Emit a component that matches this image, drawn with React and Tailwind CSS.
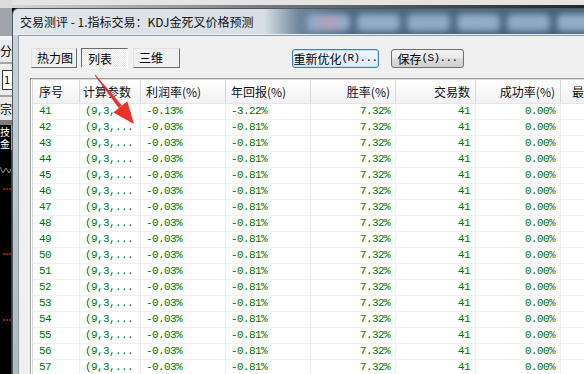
import React from "react";

const rows = Array.from({ length: 17 }, (_, i) => ({
  id: 41 + i,
  profit: i === 0 ? "-0.13%" : "-0.03%",
  annual: i === 0 ? "-3.22%" : "-0.81%",
}));

function LeftBackdrop() {
  return (
    <div className="w-[12px] shrink-0 flex flex-col overflow-hidden">
      <div className="h-[8px] bg-[#dcdcdc]" />
      <div className="h-[28px] bg-[#9ea4aa]" />
      <div className="h-[4px] bg-[#f4f4f4]" />
      <div className="h-[22px] bg-[#e9e9e9] flex items-center text-[12px] leading-none">分</div>
      <div className="h-[2px] bg-[#a3a3a3]" />
      <div className="h-[31px] bg-[#ececec] flex items-center">
        <div className="ml-[2px] w-[10px] h-[20px] border border-r-0 border-[#3a3a3a] bg-white flex items-center pl-[1px] text-[11px] leading-none">1</div>
      </div>
      <div className="h-[2px] bg-[#a3a3a3]" />
      <div className="h-[23px] bg-[#e9e9e9] flex items-center text-[12px] leading-none">宗</div>
      <div className="h-[5px] bg-[#7c7c7c]" />
      <div className="h-[25px] bg-black text-white text-[10px] leading-[12px] pt-px border-r border-[#9a9a9a]">
        技<br />金
      </div>
      <div className="flex-1 bg-black flex flex-col border-r border-[#3c3c3c]">
        <svg className="mt-[16px]" width="11" height="8" viewBox="0 0 11 8">
          <polyline points="0,1 3,7 6,2 9,7 11,3" fill="none" stroke="#8a8a8a" strokeWidth="1" />
        </svg>
        <div className="mt-[14px] ml-[3px] w-[8px] border-t-2 border-dotted border-[#8c1a1a]" />
        <div className="mt-[63px] ml-[3px] w-[8px] border-t-2 border-dotted border-[#8c1a1a]" />
        <div className="mt-[64px] ml-[3px] w-[8px] border-t-2 border-dotted border-[#8c1a1a]" />
      </div>
    </div>
  );
}

function TitleBar() {
  return (
    <div className="h-[26px] shrink-0 flex items-center overflow-hidden bg-[linear-gradient(90deg,#e1e6eb_0%,#d7dee5_44%,#6f879e_50%,#4e6882_58%,#46607a_100%)] shadow-[inset_0_-1px_0_#eef2f5]">
      <div className="w-[294px] shrink-0 pl-[7px] text-[12px] leading-none text-[#111] whitespace-nowrap">
        交易测评 - 1.指标交易：KDJ金死叉价格预测
      </div>
      <div className="flex gap-[7px] blur-[3px]">
        <div className="w-[43px] h-[17px] shrink-0 rounded-[5px] bg-[radial-gradient(circle,#b8a0b2_0%,#93accb_70%)]" />
        <div className="w-[43px] h-[17px] shrink-0 rounded-[5px] bg-[#93adc6]" />
        <div className="w-[43px] h-[17px] shrink-0 rounded-[5px] bg-[#91abc4]" />
        <div className="w-[43px] h-[17px] shrink-0 rounded-[5px] bg-[#93adc6]" />
        <div className="w-[43px] h-[17px] shrink-0 rounded-[5px] bg-[#91abc4]" />
        <div className="w-[43px] h-[17px] shrink-0 rounded-[5px] bg-[#93adc6]" />
      </div>
    </div>
  );
}

function Tab({ children, pressed, className = "" }) {
  const look = pressed
    ? "border-t-[#6b6b6b] border-l-[#6b6b6b] border-r-white border-b-white pl-[6px] pt-px bg-[repeating-conic-gradient(#ffffff_0_25%,#e9e9e9_0_50%)] bg-[length:2px_2px]"
    : "border-t-[#e2e2e2] border-l-[#e2e2e2] border-r-[#6b6b6b] border-b-[#6b6b6b] pl-[5px] bg-[#f0f0f0]";
  return (
    <div className={`h-[20px] border flex items-center text-[12px] leading-none ${look} ${className}`}>
      {children}
    </div>
  );
}

const mono = "font-['Liberation_Mono',monospace] text-[11px] tracking-[-0.6px] leading-none";

function Table() {
  const head = "h-full flex items-center border-r border-[#d8d8d8] shrink-0 whitespace-nowrap";
  const cell = "h-full flex items-center border-r border-[#f0f0f0] shrink-0 whitespace-nowrap";
  return (
    <div className="mt-[10px] flex-1 min-h-0 border-l border-t border-[#a0a0a0] pl-px bg-white">
      <div className="h-full border-l border-t border-[#dadada] overflow-hidden flex flex-col">
        <div className="h-[24px] shrink-0 flex border-b border-[#e5e5e5] bg-gradient-to-b from-white to-[#f1f2f4] text-[12px] leading-none text-[#111]">
          <div className={`${head} w-[47px] pl-[6px]`}>序号</div>
          <div className={`${head} w-[61px] pl-[3px]`}>计算参数</div>
          <div className={`${head} w-[85px] pl-[5px]`}>利润率(%)</div>
          <div className={`${head} w-[85px] pl-[5px]`}>年回报(%)</div>
          <div className={`${head} w-[85px] justify-end pr-[5px]`}>胜率(%)</div>
          <div className={`${head} w-[80px] justify-end pr-[5px]`}>交易数</div>
          <div className={`${head} w-[85px] justify-end pr-[5px]`}>成功率(%)</div>
          <div className="h-full flex items-center pl-[11px] whitespace-nowrap">最</div>
        </div>
        {rows.map((r) => (
          <div key={r.id} className={`h-[16px] shrink-0 flex border-b border-[#f0f0f0] text-[#007000] ${mono}`}>
            <div className={`${cell} w-[47px] pl-[6px]`}>{r.id}</div>
            <div className={`${cell} w-[61px] pl-[5px]`}>(9,3,...</div>
            <div className={`${cell} w-[85px] pl-[5px]`}>{r.profit}</div>
            <div className={`${cell} w-[85px] pl-[5px]`}>{r.annual}</div>
            <div className={`${cell} w-[85px] justify-end pr-[5px]`}>7.32%</div>
            <div className={`${cell} w-[80px] justify-end pr-[5px]`}>41</div>
            <div className={`${cell} w-[85px] justify-end pr-[5px]`}>0.00%</div>
            <div className="flex-1" />
          </div>
        ))}
      </div>
    </div>
  );
}

function Client() {
  return (
    <div className="flex-1 min-w-0 flex flex-col bg-[#f0f0f0] border-l border-t border-[#8d9aa7] pl-[11px] pt-[12px]">
      <div className="flex shrink-0 h-[20px]">
        <div className="flex ml-px shrink-0">
          <Tab className="w-[46px]">热力图</Tab>
          <Tab pressed className="w-[47px] ml-[4px]">列表</Tab>
          <Tab className="w-[47px] ml-[5px]">三维</Tab>
        </div>
        <div className="flex ml-[112px] mt-px gap-[12px] shrink-0">
          <button className="w-[87px] h-[19px] rounded-[3px] border border-[#3c7fb1] bg-gradient-to-b from-[#f4f9fd] to-[#d8eaf7] shadow-[inset_0_0_0_1px_#bfe3fa] flex items-center justify-center text-[12px] leading-none text-black">
            <span>重新优化</span>
            <span className={mono}>(R)...</span>
          </button>
          <button className="w-[73px] h-[19px] rounded-[3px] border border-[#707070] bg-[linear-gradient(#f2f2f2,#ebebeb_50%,#dddddd_50%,#cfcfcf)] flex items-center justify-center text-[12px] leading-none text-black">
            <span>保存</span>
            <span className={mono}>(S)...</span>
          </button>
        </div>
      </div>
      <Table />
    </div>
  );
}

function Arrow() {
  return (
    <svg className="absolute left-0 top-0 pointer-events-none" width="584" height="374" viewBox="0 0 584 374">
      <polygon points="95.4,74.7 94.6,75.3 118.7,108 121.9,105.5" fill="#e8332b" />
      <polygon points="127.3,101.2 113.3,112.4 134,124" fill="#e8332b" />
    </svg>
  );
}

export default function App() {
  return (
    <div className="w-[584px] h-[374px] overflow-hidden flex bg-black relative font-['Noto_Sans_CJK_SC','Noto_Sans',sans-serif] text-[12px] text-black">
      <LeftBackdrop />
      <div className="flex-1 flex flex-col min-w-0">
        <div className="h-[8px] shrink-0 flex flex-col">
          <div className="h-[5px] bg-[#e4e4e4]" />
          <div className="h-[3px] bg-gradient-to-r from-[#d6d6d6] via-[#707070] to-[#262626]" />
        </div>
        <div className="flex-1 min-h-0 flex flex-col rounded-tl-[6px] border-l border-t border-[#4d5a66] overflow-hidden">
          <TitleBar />
          <div className="flex-1 min-h-0 flex">
            <div className="w-[5px] shrink-0 bg-gradient-to-b from-[#c9d1d9] to-[#b3bac1]" />
            <Client />
          </div>
        </div>
      </div>
      <Arrow />
    </div>
  );
}
